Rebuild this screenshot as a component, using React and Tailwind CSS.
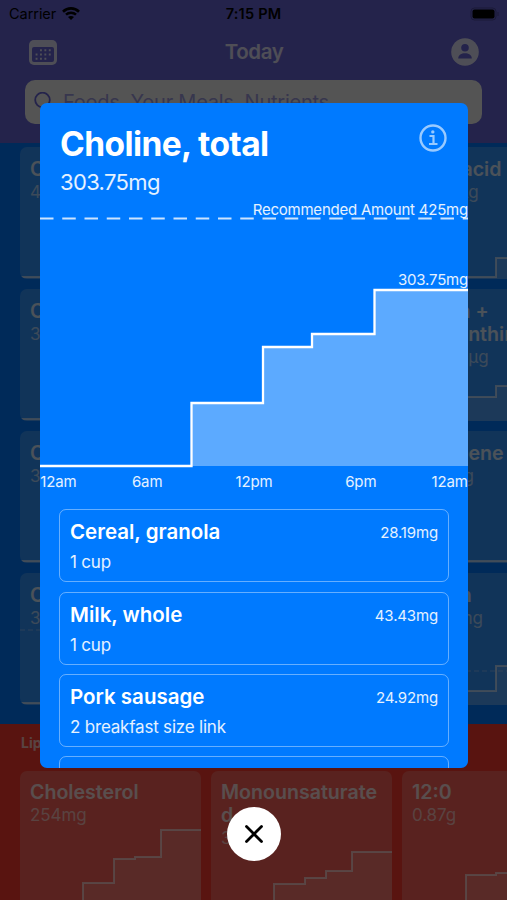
import React from "react";

const foods = [
  { name: "Cereal, granola", amount: "28.19mg", serving: "1 cup" },
  { name: "Milk, whole", amount: "43.43mg", serving: "1 cup" },
  { name: "Pork sausage", amount: "24.92mg", serving: "2 breakfast size link" },
];

const vitaminRows = [
  [
    { name: "Choline", amount: "425mg", line: "0,130 180,130" },
    { name: "", amount: "" },
    { name: "Folic acid", amount: "460.8µg", line: "0,130 94,130 94,111 106,111" },
  ],
  [
    { name: "Choline", amount: "303mg", line: "0,130 180,130" },
    { name: "", amount: "" },
    { name: "Lutein +\nzeaxanthin", amount: "388.60µg", line: "0,108 94,108 94,97 106,97" },
  ],
  [
    { name: "Carotene", amount: "312µg", line: "0,130 180,130" },
    { name: "", amount: "" },
    { name: "Lycopene", amount: "2463µg", line: "0,130 106,130" },
  ],
  [
    { name: "Choline", amount: "303mg", line: "0,130 180,130", goal: 57 },
    { name: "", amount: "" },
    { name: "Niacin", amount: "24.28mg", line: "0,118 94,118 94,93 106,93", goal: 98 },
  ],
];

const lipids = [
  { name: "Cholesterol", amount: "254mg", line: "63,140 63,112 94,112 94,88 115,88 115,86 141,86 141,59 181,59" },
  { name: "Monounsaturate\nd", amount: "3.87g", line: "63,140 63,113 94,113 94,107 115,107 115,100 141,100 141,81 181,81" },
  { name: "12:0", amount: "0.87g", line: "64,140 64,104 94,104 94,102 115,102" },
];

function Card({ item, tall }) {
  const points = item.line ? item.line.split(" ") : [];
  const first = points.length ? points[0].split(",")[0] : 0;
  const last = points.length ? points[points.length - 1].split(",")[0] : 0;
  return (
    <div className="relative w-[181px] shrink-0 overflow-hidden rounded-[7px] bg-white/20">
      {item.line && (
        <svg className="absolute inset-0" width="181" height="140" fill="none">
          <polygon points={`${first},140 ${item.line} ${last},140`} fill="white" fillOpacity=".15" />
          <polyline points={item.line} stroke="white" strokeOpacity=".6" strokeWidth="2" />
          {item.goal && <path d={`M0 ${item.goal}H181`} stroke="white" strokeOpacity=".35" strokeDasharray="5 3" />}
        </svg>
      )}
      <div className={`relative pl-[10px] ${tall ? "pt-[10px]" : "pt-[11px]"}`}>
        <div className="whitespace-pre text-[19.6px] font-semibold leading-[23px] text-white/80">{item.name}</div>
        <div className="whitespace-pre text-[17px] leading-[22px] tracking-[-0.1px] text-white/60">{item.amount}</div>
      </div>
    </div>
  );
}

function Background() {
  return (
    <div className="flex h-[900px] w-[507px] flex-col overflow-hidden bg-[#ff3b30]">
      <header className="h-[143px] shrink-0 bg-[#6764d6]">
        <div className="grid h-[28px] grid-cols-3 items-center px-[9px] text-[14.5px] text-black">
          <div className="flex items-center gap-[6px]">
            <span className="tracking-[-0.05px]">Carrier</span>
            <svg width="18" height="13" viewBox="0 0 18 13" fill="none" stroke="black" className="-mt-[2px]">
              <path d="M1 4.7C5.5.3 12.5.3 17 4.7" strokeWidth="2.6" />
              <path d="M4 7.7C6.8 5 11.2 5 14 7.7" strokeWidth="2.5" />
              <path d="M9 13L6 10c1.6-1.5 4.4-1.5 6 0z" fill="black" stroke="none" />
            </svg>
          </div>
          <span className="text-center font-semibold tracking-[0.2px]">7:15 PM</span>
          <svg className="-mr-[1px] -mt-[1px] justify-self-end" width="29" height="14" fill="none">
            <rect x="1" y="1" width="25" height="12" rx="3.5" stroke="black" strokeOpacity=".25" />
            <rect x="2.5" y="2.5" width="22" height="9" rx="2" fill="black" />
            <path d="M28 5v4" stroke="black" strokeOpacity=".25" />
          </svg>
        </div>
        <div className="flex h-[52px] items-center justify-between pb-[4px] pl-[29px] pr-[28px]">
          <svg width="28" height="25" viewBox="0 0 28 25">
            <rect width="28" height="25" rx="5" fill="white" fillOpacity=".8" />
            <rect x="3" y="7" width="22" height="15" rx="2" fill="#6764d6" />
            <g stroke="white" strokeOpacity=".8" strokeWidth="1.9" strokeDasharray="1.9 2.5">
              <path d="M11 10.300H22.500M6.600 14.500H22.500M6.600 18.700H18" />
            </g>
          </svg>
          <h1 className="text-[20.5px] font-semibold tracking-[-0.4px] text-white/80">Today</h1>
          <svg width="28" height="28" viewBox="0 0 28 28">
            <circle cx="14" cy="14" r="13.8" fill="white" fillOpacity=".8" />
            <circle cx="14" cy="9.7" r="3.8" fill="#6764d6" />
            <path d="M7.200 20.500c0-3.700 3.300-5.300 6.800-5.300s6.800 1.600 6.800 5.300z" fill="#6764d6" />
          </svg>
        </div>
        <div className="mx-[25px] flex h-[44px] items-center gap-[10px] rounded-[10px] bg-[#f0f0f0] pl-[9px] text-[#6764d6]">
          <svg width="19" height="20" viewBox="0 0 19 20" fill="none" stroke="currentColor" strokeWidth="1.8"><circle cx="8.500" cy="8" r="7.300" /><path d="M13.500 13l5 6" /></svg>
          <span className="text-[20px] tracking-[-0.24px] opacity-60">Foods, Your Meals, Nutrients</span>
        </div>
      </header>
      <section className="flex h-[581px] shrink-0 flex-col gap-[10px] bg-[#007aff] pt-[4px]">
        {vitaminRows.map((row, index) => (
          <div key={index} className="flex h-[132px] shrink-0 gap-[10px] pl-[20px]">
            {row.map((item, col) => <Card key={col} item={item} />)}
          </div>
        ))}
      </section>
      <section className="flex-1">
        <h2 className="h-[47px] pl-[21px] pt-[9px] text-[14px] font-bold leading-[20px] text-white/70">Lipids</h2>
        <div className="flex h-[140px] gap-[10px] pl-[20px]">
          {lipids.map((item) => <Card key={item.name} item={item} tall />)}
        </div>
      </section>
    </div>
  );
}

function Chart() {
  return (
    <div className="relative h-[298px] w-[428px] text-[15px] text-white/90">
      <svg className="absolute inset-0" width="428" height="298" fill="none">
        <path d="M0 17.5H428" stroke="white" strokeOpacity=".8" strokeWidth="2" strokeDasharray="13.5 8.75" />
        <path d="M152 265V202H223V145H272V132H334V89H428V265Z" fill="white" fillOpacity=".36" />
        <path d="M0 265H151.500V202H223V146H272V133H334.500V89H428" stroke="white" strokeWidth="2.300" />
      </svg>
      <span className="absolute right-0 -top-[1px] leading-[20px] tracking-[-0.22px]">Recommended Amount 425mg</span>
      <span className="absolute right-0 top-[69px] leading-[20px] tracking-[-0.2px]">303.75mg</span>
      <div className="absolute -inset-x-[53px] top-[271px] grid grid-cols-5 text-center leading-[20px] tracking-[-0.1px]">
        <span className="pl-[36px]">12am</span><span>6am</span><span>12pm</span><span>6pm</span><span className="pr-[36px]">12am</span>
      </div>
    </div>
  );
}

export default function App() {
  return (
    <main className="relative h-[900px] w-[507px] overflow-hidden font-['Inter','Liberation_Sans',sans-serif]">
      <Background />
      <div className="absolute inset-0 bg-black/65" />
      <div className="absolute left-[40px] top-[103px] h-[665px] w-[428px] overflow-hidden rounded-[7px] bg-[#007aff] text-white">
        <div className="flex h-[98px] justify-between pl-[20px] pr-[21px] pt-[20px]">
          <div>
            <h2 className="text-[33.500px] font-bold leading-[42px] tracking-[-0.58px]">Choline, total</h2>
            <p className="text-[22px] leading-[34px] tracking-[-0.65px] text-white/90">303.75mg</p>
          </div>
          <svg className="mt-[1px]" width="28" height="28" viewBox="0 0 28 28" fill="none" stroke="white" strokeOpacity=".6" strokeWidth="2.4">
            <circle cx="14" cy="14" r="12.500" />
            <path d="M10.500 12H14.500V20M10 20H18.500" strokeWidth="2.200" />
            <circle cx="13.800" cy="7.900" r="1.700" fill="white" fillOpacity=".6" stroke="none" />
          </svg>
        </div>
        <Chart />
        <div className="flex flex-col gap-[9.3px] px-[19px] pt-[10.3px]">
          {foods.map((food) => (
            <article key={food.name} className="flex h-[73px] shrink-0 justify-between rounded-[7px] border-[1.500px] border-white/40 px-[10px] pt-[8px]">
              <div>
                <h3 className="text-[20.5px] font-semibold leading-[28px]">{food.name}</h3>
                <p className="text-[17px] leading-[32px] tracking-[-0.2px] text-white/90">{food.serving}</p>
              </div>
              <span className="text-[15px] leading-[30px] tracking-[-0.15px] text-white/90">{food.amount}</span>
            </article>
          ))}
          <article className="h-[73px] shrink-0 rounded-[7px] border-[1.500px] border-white/40" />
        </div>
      </div>
      <button className="absolute left-[227px] top-[807px] flex size-[54px] items-center justify-center rounded-full bg-white" aria-label="Close">
        <svg width="18" height="18" viewBox="0 0 18 18" fill="none" stroke="black" strokeWidth="2.800" strokeLinecap="round"><path d="M1.500 1.500l15 15M16.500 1.500L1.500 16.500" /></svg>
      </button>
    </main>
  );
}
